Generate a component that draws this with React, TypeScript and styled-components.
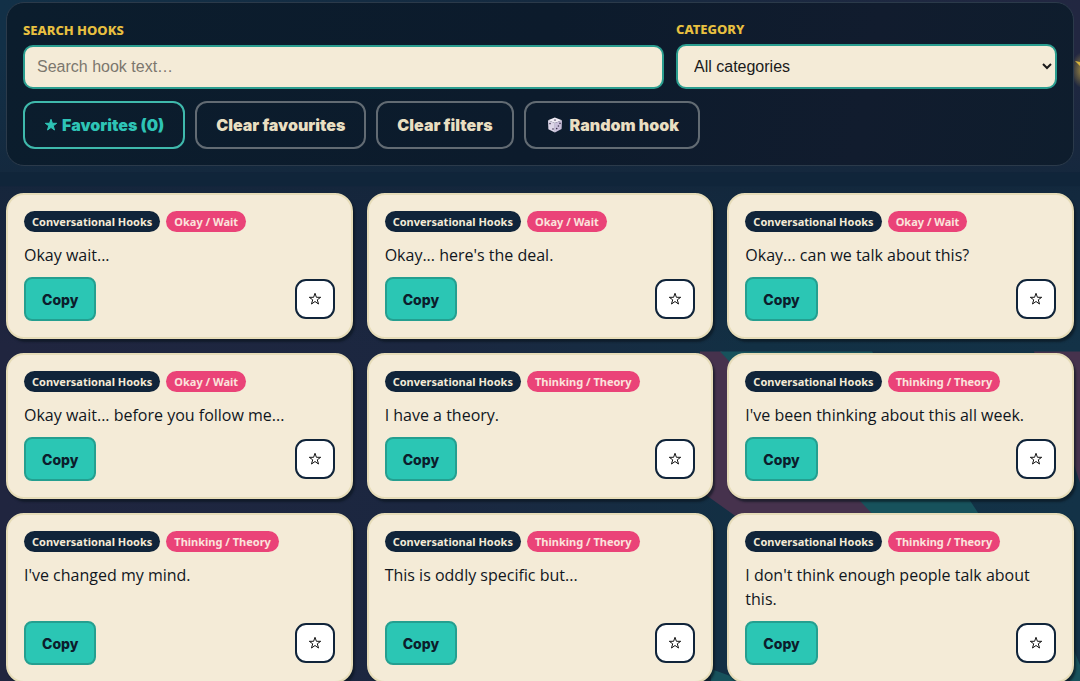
import React, { useState } from "react";
import styled, { createGlobalStyle } from "styled-components";

const GlobalStyle = createGlobalStyle`
  *, *::before, *::after { box-sizing: border-box; }
  body {
    margin: 0;
    background: #14253c;
    font-family: "Open Sans", "Noto Sans", sans-serif;
    color: #10161d;
  }
`;

const Page = styled.main`
  position: relative;
  min-height: 100vh;
  overflow: hidden;
  padding: 2px 6px 0;
`;

const Backdrop = styled.svg`
  position: absolute;
  inset: 0;
  width: 100%;
  height: 100%;
`;

const Content = styled.div`
  position: relative;
  display: grid;
  gap: 27px;
`;

const Panel = styled.form`
  display: grid;
  gap: 12px;
  padding: 16px;
  border: 1px solid #2b3a4a;
  border-radius: 18px;
  background: linear-gradient(100deg, #0b1d2d, #0c1b2c 50%, #111c2e 80%, #0e1d2d);
`;

const Fields = styled.div`
  display: grid;
  grid-template-columns: 641fr 381fr;
  align-items: end;
  gap: 12px;
`;

const Field = styled.div`
  display: grid;
  gap: 5px;
`;

const Label = styled.label`
  font-family: "Noto Sans", sans-serif;
  font-size: 13px;
  line-height: 20px;
  font-weight: 800;
  text-transform: uppercase;
  color: #e8c040;
`;

const controlStyle = `
  width: 100%;
  border: 2px solid #2a9d8f;
  border-radius: 10px;
  background: #f4ebd7;
  font-family: "Liberation Sans", Arial, sans-serif;
  font-size: 16px;
  color: #1a1a1a;
`;

const SearchInput = styled.input`
  ${controlStyle}
  height: 44px;
  padding: 0 12px;
  &::placeholder { color: #7c776e; }
`;

const Select = styled.select`
  ${controlStyle}
  height: 45px;
  padding: 0 12px;
`;

const Actions = styled.div`
  display: flex;
  flex-wrap: wrap;
  gap: 10px;
`;

const ActionButton = styled.button<{ $accent?: boolean }>`
  display: flex;
  align-items: center;
  gap: 4px;
  height: 48px;
  padding: 0 19px;
  border: 2px solid ${(p) => (p.$accent ? "#3fb9ac" : "#626b73")};
  border-radius: 12px;
  background: transparent;
  color: ${(p) => (p.$accent ? "#2ec4b6" : "#e9dfc2")};
  font-family: Inter, sans-serif;
  font-size: 16px;
  font-weight: 900;
`;

const Cards = styled.section`
  display: grid;
  grid-template-columns: repeat(3, minmax(0, 1fr));
  gap: 14px;
`;

const Card = styled.article`
  display: flex;
  flex-direction: column;
  padding: 16px;
  border: 2px solid #e6dcb8;
  border-radius: 18px;
  background: #f4ebd7;
  box-shadow: 2px 3px 2px rgba(10, 20, 28, 0.6);
`;

const Tags = styled.div`
  display: flex;
  gap: 6px;
`;

const Tag = styled.span<{ $pink?: boolean }>`
  padding: 0 8px;
  border-radius: 11px;
  background: ${(p) => (p.$pink ? "#ea4378" : "#10243a")};
  color: ${(p) => (p.$pink ? "#fbe3dc" : "#f4ebd7")};
  font-family: "Noto Sans", sans-serif;
  font-size: 11px;
  line-height: 21px;
  font-weight: 700;
`;

const HookText = styled.p`
  flex: 1;
  margin: 11px 0 10px;
  font-size: 16px;
  line-height: 24px;
  font-weight: 500;
`;

const CardFooter = styled.div`
  display: flex;
  align-items: center;
  justify-content: space-between;
`;

const CopyButton = styled.button`
  height: 44px;
  padding: 0 16px;
  border: 2px solid #249f90;
  border-radius: 8px;
  background: #2bc6b4;
  color: #0c1d2c;
  font-family: Inter, sans-serif;
  font-size: 14px;
  font-weight: 800;
`;

const StarButton = styled.button`
  display: grid;
  place-items: center;
  width: 40px;
  height: 40px;
  padding: 0;
  border: 2px solid #10243a;
  border-radius: 11px;
  background: #fff;
  color: #111;
`;

const StarIcon = ({ filled }: { filled?: boolean }) => (
  <svg width="14" height="14" viewBox="0 0 14 14" aria-hidden="true">
    <path
      d="M7 1.3 8.4 5.3H12.7L9.3 7.8 10.5 12 7 9.5 3.5 12 4.7 7.8 1.3 5.3H5.6Z"
      fill={filled ? "currentColor" : "none"}
      stroke="currentColor"
      strokeWidth={1}
    />
  </svg>
);

const DieIcon = () => (
  <svg width="21" height="18" viewBox="-1 0 21 18" aria-hidden="true">
    <path d="M8.8 1.5 16 4.2 8.9 7 2 4.2Z" fill="#f1edf6" />
    <path d="M2 4.2 8.9 7V16.5L2.4 13.2Z" fill="#ddd6e8" />
    <path d="M8.9 7 16 4.2 15.6 13 8.9 16.5Z" fill="#c9bfda" />
    <g fill="#3f3650">
      <ellipse cx="9" cy="4" rx="1.2" ry="0.6" />
      <circle cx="4" cy="7.6" r="0.8" />
      <circle cx="7" cy="13" r="0.8" />
      <circle cx="14" cy="7.4" r="0.8" />
      <circle cx="12.4" cy="10" r="0.8" />
      <circle cx="10.7" cy="12.6" r="0.8" />
    </g>
  </svg>
);

const hooks = [
  ["Okay / Wait", "Okay wait..."],
  ["Okay / Wait", "Okay... here's the deal."],
  ["Okay / Wait", "Okay... can we talk about this?"],
  ["Okay / Wait", "Okay wait... before you follow me..."],
  ["Thinking / Theory", "I have a theory."],
  ["Thinking / Theory", "I've been thinking about this all week."],
  ["Thinking / Theory", "I've changed my mind."],
  ["Thinking / Theory", "This is oddly specific but..."],
  ["Thinking / Theory", "I don't think enough people talk about this."],
];

export default function App() {
  const [query, setQuery] = useState("");
  return (
    <>
      <GlobalStyle />
      <Page>
        <Backdrop viewBox="0 0 1080 682" preserveAspectRatio="none" aria-hidden="true">
          <defs>
            <linearGradient id="top" x1="0" y1="0" x2="1" y2="0">
              <stop offset="0" stopColor="#123047" />
              <stop offset="0.5" stopColor="#152a40" />
              <stop offset="1" stopColor="#222741" />
            </linearGradient>
            <linearGradient id="topFade" x1="0" y1="0" x2="0" y2="1">
              <stop offset="0.3" stopColor="#14283d" stopOpacity="0" />
              <stop offset="1" stopColor="#14283d" stopOpacity="0.9" />
            </linearGradient>
            <linearGradient id="body" x1="0" y1="0" x2="1" y2="0">
              <stop offset="0" stopColor="#20253f" />
              <stop offset="0.4" stopColor="#1b2740" />
              <stop offset="0.7" stopColor="#123044" />
              <stop offset="1" stopColor="#133247" />
            </linearGradient>
            <radialGradient id="glow">
              <stop offset="0" stopColor="#e8c040" stopOpacity="0.6" />
              <stop offset="1" stopColor="#e8c040" stopOpacity="0" />
            </radialGradient>
            <linearGradient id="bodyFade" x1="0" y1="0" x2="0" y2="1">
              <stop offset="0" stopColor="#13263b" stopOpacity="0.8" />
              <stop offset="1" stopColor="#13263b" stopOpacity="0" />
            </linearGradient>
          </defs>
          <rect width="1080" height="172" fill="url(#top)" />
          <rect width="1080" height="172" fill="url(#topFade)" />
          <ellipse cx="1082" cy="70" rx="11" ry="18" fill="url(#glow)" />
          <path d="M1075 61 1080 62V66Z" fill="#d8b43c" />
          <rect y="186" width="1080" height="496" fill="url(#body)" />
          <rect y="186" width="1080" height="160" fill="url(#bodyFade)" />
          <rect y="172" width="1080" height="14" fill="#10253a" />
          <path d="M700 351H722L882 515H735L700 490Z" fill="#46324d" />
          <path d="M720 351H872L980 515H874Z" fill="#17525c" />
          <path d="M1034 351H1080V482L1066 440Z" fill="#46324d" />
          <path d="M711 668 736 677V682H711Z" fill="#17525c" />
          <path d="M1070 640 1080 664V682H1070Z" fill="#17525c" />
        </Backdrop>
        <Content>
          <Panel onSubmit={(e) => e.preventDefault()}>
            <Fields>
              <Field>
                <Label htmlFor="search">Search hooks</Label>
                <SearchInput
                  id="search"
                  placeholder="Search hook text…"
                  value={query}
                  onChange={(e) => setQuery(e.target.value)}
                />
              </Field>
              <Field>
                <Label htmlFor="category">Category</Label>
                <Select id="category">
                  <option>All categories</option>
                </Select>
              </Field>
            </Fields>
            <Actions>
              <ActionButton type="button" $accent><StarIcon filled />Favorites (0)</ActionButton>
              <ActionButton type="button">Clear favourites</ActionButton>
              <ActionButton type="button">Clear filters</ActionButton>
              <ActionButton type="button"><DieIcon />Random hook</ActionButton>
            </Actions>
          </Panel>
          <Cards>
            {hooks.map(([tag, text]) => (
              <Card key={text}>
                <Tags>
                  <Tag>Conversational Hooks</Tag>
                  <Tag $pink>{tag}</Tag>
                </Tags>
                <HookText>{text}</HookText>
                <CardFooter>
                  <CopyButton type="button">Copy</CopyButton>
                  <StarButton type="button" aria-label="Add to favourites"><StarIcon /></StarButton>
                </CardFooter>
              </Card>
            ))}
          </Cards>
        </Content>
      </Page>
    </>
  );
}
